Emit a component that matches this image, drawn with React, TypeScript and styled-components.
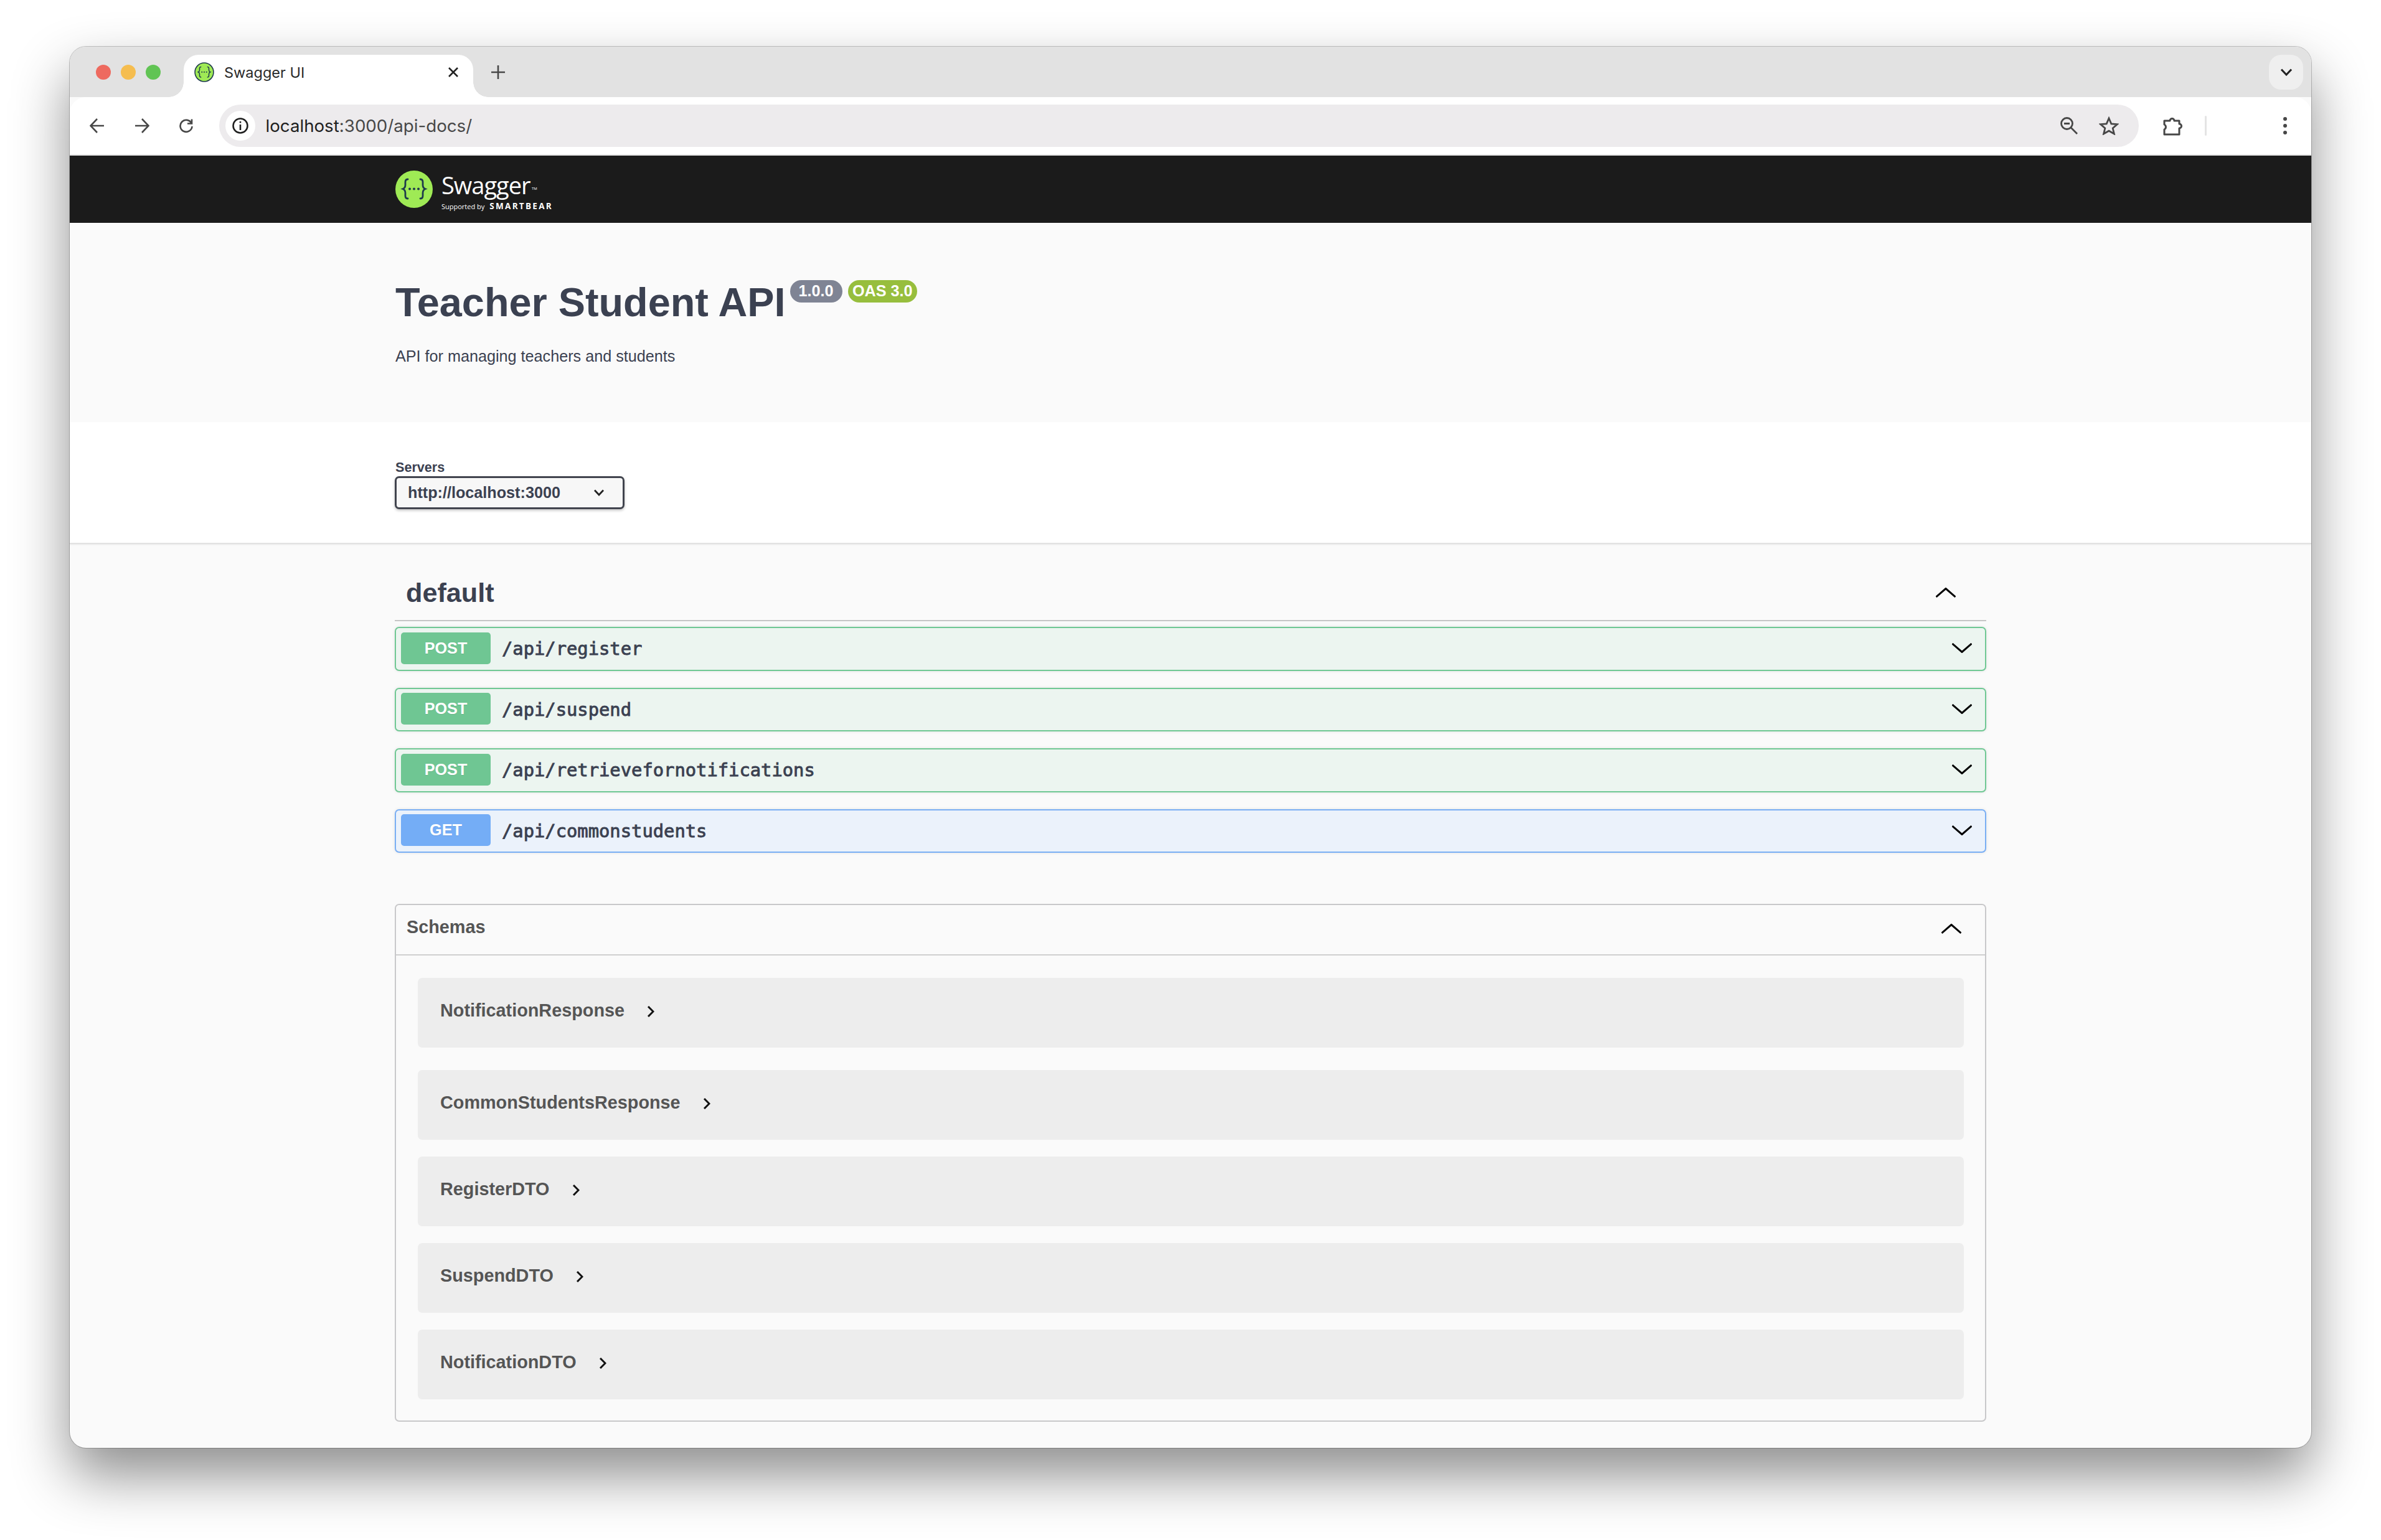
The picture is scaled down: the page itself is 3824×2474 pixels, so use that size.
import React from 'react'
import styled, { createGlobalStyle } from 'styled-components'

const GlobalStyle = createGlobalStyle`
    html, body {
        margin: 0;
        padding: 0;
        background: #fff;
    }
    * {
        box-sizing: border-box;
    }
`

const SANS = '"Liberation Sans", Arial, sans-serif'
const MONO = '"DejaVu Sans Mono", monospace'
const UI = 'Inter, "Liberation Sans", sans-serif'

const Stage = styled.div`
    width: 3824px;
    height: 2474px;
    padding: 75px 112px 0;
    overflow: hidden;
`

const Window = styled.div`
    width: 3600px;
    height: 2251px;
    border-radius: 26px;
    overflow: hidden;
    background: #fafafa;
    box-shadow: 0 0 0 1px rgba(0, 0, 0, 0.22), 0 44px 90px rgba(0, 0, 0, 0.45);
`

const TabStrip = styled.div`
    height: 81px;
    background: #e2e2e2;
    padding: 13px 13px 0 42px;
    display: flex;
    align-items: flex-start;
`

const Lights = styled.div`
    display: flex;
    gap: 16px;
    margin: 16px 37px 0 0;
`

const Light = styled.span<{ $color: string }>`
    width: 24px;
    height: 24px;
    border-radius: 50%;
    background: ${(p) => p.$color};
`

const Tab = styled.div`
    position: relative;
    width: 465px;
    height: 68px;
    background: #fff;
    border-radius: 24px 24px 0 0;
    display: flex;
    align-items: center;
    padding: 0 24px 12px 17px;

    &::before,
    &::after {
        content: '';
        position: absolute;
        bottom: 0;
        width: 24px;
        height: 24px;
    }
    &::before {
        left: -24px;
        background: radial-gradient(circle at 0 0, #e2e2e2 23.5px, #fff 24px);
    }
    &::after {
        right: -24px;
        background: radial-gradient(circle at 100% 0, #e2e2e2 23.5px, #fff 24px);
    }
`

const TabTitle = styled.span`
    font-family: ${UI};
    font-size: 23.5px;
    color: #2a2a2a;
    margin-left: 16px;
    flex: 1;
`

const NewTab = styled.div`
    width: 22px;
    height: 22px;
    margin: 17px 0 0 29px;
    display: flex;
`

const TabMenu = styled.div`
    width: 55px;
    height: 56px;
    margin-left: auto;
    border-radius: 20px;
    background: #efefef;
    display: flex;
    align-items: center;
    justify-content: center;
`

const Toolbar = styled.div`
    height: 94px;
    background: #fff;
    border-bottom: 2px solid #e4e4e4;
    border-radius: 26px 26px 0 0;
    display: flex;
    align-items: center;
    padding: 0 32px;
`

const NavIcon = styled.svg`
    width: 24px;
    height: 24px;
    margin-right: 47.5px;
    flex: none;
`

const Address = styled.div`
    flex: none;
    width: 3083px;
    height: 68px;
    margin-left: -7px;
    border-radius: 34px;
    background: #edebed;
    display: flex;
    align-items: center;
    padding: 0 32px 0 10px;
`

const SiteInfo = styled.div`
    width: 48px;
    height: 48px;
    border-radius: 50%;
    background: #fff;
    display: flex;
    align-items: center;
    justify-content: center;
    margin-right: 17px;
`

const Url = styled.span`
    font-family: ${UI};
    font-size: 27.7px;
    color: #484848;
    flex: 1;

    b {
        font-weight: 400;
        color: #1f1f1f;
    }
`

const AddressIcons = styled.div`
    display: flex;
    align-items: center;
    gap: 34px;
`

const ToolbarEnd = styled.div`
    display: flex;
    align-items: center;
    margin-left: 38px;
`

const Divider = styled.span`
    width: 3px;
    height: 32px;
    border-radius: 2px;
    background: #e4e4e4;
    margin: 0 123px 0 36px;
`

const Dots = styled.div`
    display: flex;
    flex-direction: column;
    gap: 5px;
    span {
        width: 6px;
        height: 6px;
        border-radius: 50%;
        background: #474747;
    }
`

const Topbar = styled.header`
    height: 108px;
    background: #1b1b1b;
`

const Wrapper = styled.div`
    width: 2556px;
    margin: 0 auto;
`

const TopbarInner = styled(Wrapper)`
    display: flex;
    align-items: center;
    height: 100%;
    padding-left: 1px;
`

const LogoText = styled.div`
    margin-left: 14px;
    padding-top: 6px;
    color: #fff;
    font-family: 'Open Sans', sans-serif;
    display: flex;
    flex-direction: column;
`

const LogoName = styled.span`
    font-size: 38px;
    line-height: 44px;
    letter-spacing: -1px;
    position: relative;

    sup {
        position: absolute;
        left: 145px;
        top: 24px;
        font-size: 6px;
        line-height: 8px;
        letter-spacing: 0;
    }
`

const LogoSub = styled.span`
    font-size: 11px;
    line-height: 14px;
    margin-top: 5px;
    display: flex;
    align-items: baseline;
    gap: 8px;

    strong {
        font-size: 13.5px;
        font-weight: 700;
        letter-spacing: 2.3px;
    }
`

const InfoSection = styled.section`
    height: 320px;
    background: #fafafa;
`

const InfoInner = styled(Wrapper)`
    padding: 92px 0 0 1px;
`

const TitleRow = styled.div`
    display: flex;
    align-items: flex-start;
    gap: 9px;
`

const Title = styled.h2`
    margin: -2px -2px 0 0;
    font-family: ${SANS};
    font-weight: 700;
    font-size: 64.8px;
    line-height: 75px;
    color: #3b4151;
`

const Stamp = styled.span<{ $color: string; $pad: number }>`
    height: 36px;
    padding: 0 ${(p) => p.$pad}px;
    border-radius: 18px;
    background: ${(p) => p.$color};
    color: #fff;
    font-family: ${SANS};
    font-weight: 700;
    font-size: 25.2px;
    line-height: 35px;
`

const Description = styled.p`
    margin: 32px 0 0;
    font-family: ${SANS};
    font-size: 25.2px;
    line-height: 34px;
    color: #3b4151;
`

const ServersSection = styled.section`
    height: 196px;
    background: #fff;
    border-bottom: 2px solid #e2e2e2;
    box-shadow: 0 1px 2px rgba(0, 0, 0, 0.08);
`

const ServersInner = styled(Wrapper)`
    padding: 61px 0 0;
`

const ServersLabel = styled.div`
    font-family: ${SANS};
    font-weight: 700;
    font-size: 21.6px;
    line-height: 24px;
    color: #3b4151;
    padding-left: 1px;
    margin-bottom: 2px;
`

const ServerSelect = styled.div`
    width: 369px;
    height: 53px;
    border: 3.6px solid #41444e;
    border-radius: 7px;
    background: #f7f7f7;
    box-shadow: 0 2px 4px rgba(0, 0, 0, 0.25);
    display: flex;
    align-items: center;
    justify-content: space-between;
    padding: 0 30px 0 18px;
    font-family: ${SANS};
    font-weight: 700;
    font-size: 25.2px;
    color: #3b4151;
`

const Main = styled(Wrapper)`
    padding-top: 25px;
`

const TagHeader = styled.div`
    height: 99px;
    border-bottom: 2px solid #c6c6c6;
    display: flex;
    align-items: center;
    justify-content: space-between;
    padding: 8px 49px 0 18px;
`

const TagName = styled.h3`
    margin: 0;
    font-family: ${SANS};
    font-weight: 700;
    font-size: 43.2px;
    line-height: 50px;
    color: #3b4151;
`

const OpList = styled.div`
    display: flex;
    flex-direction: column;
    gap: 27px;
    margin-top: 9px;
`

const Op = styled.div<{ $border: string; $bg: string }>`
    height: 70.5px;
    border: 2px solid ${(p) => p.$border};
    border-radius: 7px;
    background: ${(p) => p.$bg};
    box-shadow: 0 0 5px rgba(0, 0, 0, 0.1);
    display: flex;
    align-items: center;
    padding: 0 21px 2px 8px;
`

const Method = styled.span<{ $bg: string }>`
    width: 144px;
    height: 51px;
    border-radius: 5px;
    background: ${(p) => p.$bg};
    color: #fff;
    display: flex;
    align-items: center;
    justify-content: center;
    font-family: ${SANS};
    font-weight: 700;
    font-size: 25.2px;
    margin-right: 18px;
    text-shadow: 0 1px 0 rgba(0, 0, 0, 0.1);
`

const OpPath = styled.span`
    flex: 1;
    font-family: ${MONO};
    font-weight: 400;
    -webkit-text-stroke: 0.9px #3b4151;
    font-size: 28.8px;
    line-height: 34px;
    color: #3b4151;
    padding-top: 2px;
`

const Schemas = styled.section`
    margin-top: 82px;
    height: 832px;
    border: 2px solid #c8c8ca;
    border-radius: 7px;
`

const SchemasHeader = styled.div`
    height: 81px;
    border-bottom: 2px solid #cfcfcf;
    display: flex;
    align-items: center;
    justify-content: space-between;
    padding: 0 38px 4px 17px;
`

const SchemasTitle = styled.span`
    font-family: ${SANS};
    font-weight: 700;
    font-size: 28.8px;
    color: #555;
    padding-bottom: 4px;
`

const ModelList = styled.div`
    display: flex;
    flex-direction: column;
    gap: 27.4px;
    padding: 36px 34px 0 35px;
`

const Model = styled.div`
    height: 111.6px;
    border-radius: 7px;
    background: #ededed;
    display: flex;
    align-items: flex-start;
    padding: 35px 0 0 36px;

    &:first-child {
        margin-bottom: 9px;
    }
`

const ModelName = styled.span`
    font-family: ${SANS};
    font-weight: 700;
    font-size: 28.8px;
    line-height: 34px;
    color: #555;
    margin-right: 36px;
`

const Stroked = styled.svg`
    fill: none;
    stroke: currentColor;
    color: #474747;
    flex: none;
`

const Caret = ({ up, size = 32, weight = 3 }: { up?: boolean; size?: number; weight?: number }) => (
    <svg width={size} height={size / 2} viewBox="0 0 32 16" fill="none" stroke="#000" strokeWidth={weight * (32 / size)}>
        <path d={up ? 'M0.5 15 L16 1.5 L31.5 15' : 'M0.5 1 L16 14.5 L31.5 1'} />
    </svg>
)

const SmallChevron = () => (
    <svg width="12" height="18" viewBox="0 0 12 18" fill="none" stroke="#111" strokeWidth="3" style={{ marginTop: 10 }}>
        <path d="M2 1 L10 9 L2 17" />
    </svg>
)

const SwaggerMark = ({ size, ring }: { size: number; ring?: boolean }) => (
    <svg width={size} height={size} viewBox="0 0 60 60">
        <circle cx="30" cy="30" r={ring ? 28 : 30} fill="#9fea55" stroke={ring ? '#1e3a4c' : 'none'} strokeWidth={ring ? 3 : 0} />
        <g fill="none" stroke="#1e3a4c" strokeWidth="2.8" strokeLinecap="round">
            <path d="M20 14 C15 14 16 19 16 23 C16 27 14.5 28.5 12 29.5 C14.5 30.5 16 32 16 36 C16 40 15 45 20 45" />
            <path d="M40 14 C45 14 44 19 44 23 C44 27 45.5 28.5 48 29.5 C45.5 30.5 44 32 44 36 C44 40 45 45 40 45" />
        </g>
        <g fill="#1e3a4c">
            <circle cx="23" cy="29.5" r="2" />
            <circle cx="30" cy="29.5" r="2" />
            <circle cx="37" cy="29.5" r="2" />
        </g>
    </svg>
)

const operations = [
    { method: 'POST', path: '/api/register' },
    { method: 'POST', path: '/api/suspend' },
    { method: 'POST', path: '/api/retrievefornotifications' },
    { method: 'GET', path: '/api/commonstudents' },
]

const models = ['NotificationResponse', 'CommonStudentsResponse', 'RegisterDTO', 'SuspendDTO', 'NotificationDTO']

const opColors: Record<string, { border: string; bg: string; badge: string }> = {
    POST: { border: '#70c894', bg: '#ecf5f0', badge: '#6fc693' },
    GET: { border: '#7aaff4', bg: '#ebf2fb', badge: '#74adf6' },
}

const App = () => (
    <Stage>
        <GlobalStyle />
        <Window>
            <TabStrip>
                <Lights>
                    <Light $color="#ee6a5f" />
                    <Light $color="#f5bd4f" />
                    <Light $color="#61c454" />
                </Lights>
                <Tab>
                    <SwaggerMark size={32} ring />
                    <TabTitle>Swagger UI</TabTitle>
                    <Stroked width="16" height="16" viewBox="0 0 16 16" strokeWidth="2.6" style={{ color: '#222' }}>
                        <path d="M1 1 L15 15 M15 1 L1 15" />
                    </Stroked>
                </Tab>
                <NewTab>
                    <Stroked width="22" height="22" viewBox="0 0 22 22" strokeWidth="2.6">
                        <path d="M11 0 V22 M0 11 H22" />
                    </Stroked>
                </NewTab>
                <TabMenu>
                    <Stroked width="18" height="12" viewBox="0 0 18 12" strokeWidth="3" style={{ color: '#222' }}>
                        <path d="M1 1.5 L9 10 L17 1.5" />
                    </Stroked>
                </TabMenu>
            </TabStrip>
            <Toolbar>
                <NavIcon as={Stroked} viewBox="0 0 24 24" strokeWidth="2.6">
                    <path d="M23 12 H2 M12 1 L1.5 12 L12 23" />
                </NavIcon>
                <NavIcon as={Stroked} viewBox="0 0 24 24" strokeWidth="2.6">
                    <path d="M1 12 H22 M12 1 L22.5 12 L12 23" />
                </NavIcon>
                <NavIcon as={Stroked} viewBox="0 0 24 24" strokeWidth="2.6">
                    <path d="M20.5 8 A9.5 9.5 0 1 0 21.5 13" />
                    <path d="M21 1.5 V8.5 H14" />
                </NavIcon>
                <Address>
                    <SiteInfo>
                        <Stroked width="26" height="26" viewBox="0 0 26 26" strokeWidth="2.6" style={{ color: '#1f1f1f' }}>
                            <circle cx="13" cy="13" r="11.5" />
                            <path d="M13 11 V20 M13 6 V8.6" />
                        </Stroked>
                    </SiteInfo>
                    <Url>
                        <b>localhost</b>:3000/api-docs/
                    </Url>
                    <AddressIcons>
                        <Stroked width="28" height="28" viewBox="0 0 28 28" strokeWidth="2.8">
                            <circle cx="10.5" cy="10.5" r="9" />
                            <path d="M6 10.5 H15 M16.5 16.5 L27 27" />
                        </Stroked>
                        <Stroked width="32" height="30" viewBox="0 0 32 30" strokeWidth="2.8">
                            <path d="M16 3 L19.8 11.8 L29.5 12.6 L22.2 19 L24.4 28 L16 23.2 L7.6 28 L9.8 19 L2.5 12.6 L12.2 11.8 Z" />
                        </Stroked>
                    </AddressIcons>
                </Address>
                <ToolbarEnd>
                    <Stroked width="32" height="32" viewBox="0 0 32 32" strokeWidth="3" strokeLinejoin="round">
                        <path d="M3 8 H12 A3.5 3.5 0 0 1 19 8 H27 V13 A3.5 3.5 0 0 1 27 20 V30 H3 V22 A4.5 4.5 0 0 0 3 14 Z" />
                    </Stroked>
                    <Divider />
                    <Dots>
                        <span />
                        <span />
                        <span />
                    </Dots>
                </ToolbarEnd>
            </Toolbar>
            <Topbar>
                <TopbarInner>
                    <SwaggerMark size={60} />
                    <LogoText>
                        <LogoName>
                            Swagger<sup>TM</sup>
                        </LogoName>
                        <LogoSub>
                            Supported by <strong>SMARTBEAR</strong>
                        </LogoSub>
                    </LogoText>
                </TopbarInner>
            </Topbar>
            <InfoSection>
                <InfoInner>
                    <TitleRow>
                        <Title>Teacher Student API</Title>
                        <Stamp $color="#7f8494" $pad={14}>1.0.0</Stamp>
                        <Stamp $color="#97be3d" $pad={7.5}>OAS 3.0</Stamp>
                    </TitleRow>
                    <Description>API for managing teachers and students</Description>
                </InfoInner>
            </InfoSection>
            <ServersSection>
                <ServersInner>
                    <ServersLabel>Servers</ServersLabel>
                    <ServerSelect>
                        http://localhost:3000
                        <Stroked width="16" height="11" viewBox="0 0 16 11" strokeWidth="2.8" style={{ color: '#222' }}>
                            <path d="M1 1.5 L8 9 L15 1.5" />
                        </Stroked>
                    </ServerSelect>
                </ServersInner>
            </ServersSection>
            <Main>
                <TagHeader>
                    <TagName>default</TagName>
                    <Caret up />
                </TagHeader>
                <OpList>
                    {operations.map((op) => {
                        const colors = opColors[op.method]
                        return (
                            <Op key={op.path} $border={colors.border} $bg={colors.bg}>
                                <Method $bg={colors.badge}>{op.method}</Method>
                                <OpPath>{op.path}</OpPath>
                                <Caret />
                            </Op>
                        )
                    })}
                </OpList>
                <Schemas>
                    <SchemasHeader>
                        <SchemasTitle>Schemas</SchemasTitle>
                        <Caret up />
                    </SchemasHeader>
                    <ModelList>
                        {models.map((name) => (
                            <Model key={name}>
                                <ModelName>{name}</ModelName>
                                <SmallChevron />
                            </Model>
                        ))}
                    </ModelList>
                </Schemas>
            </Main>
        </Window>
    </Stage>
)

export default App
